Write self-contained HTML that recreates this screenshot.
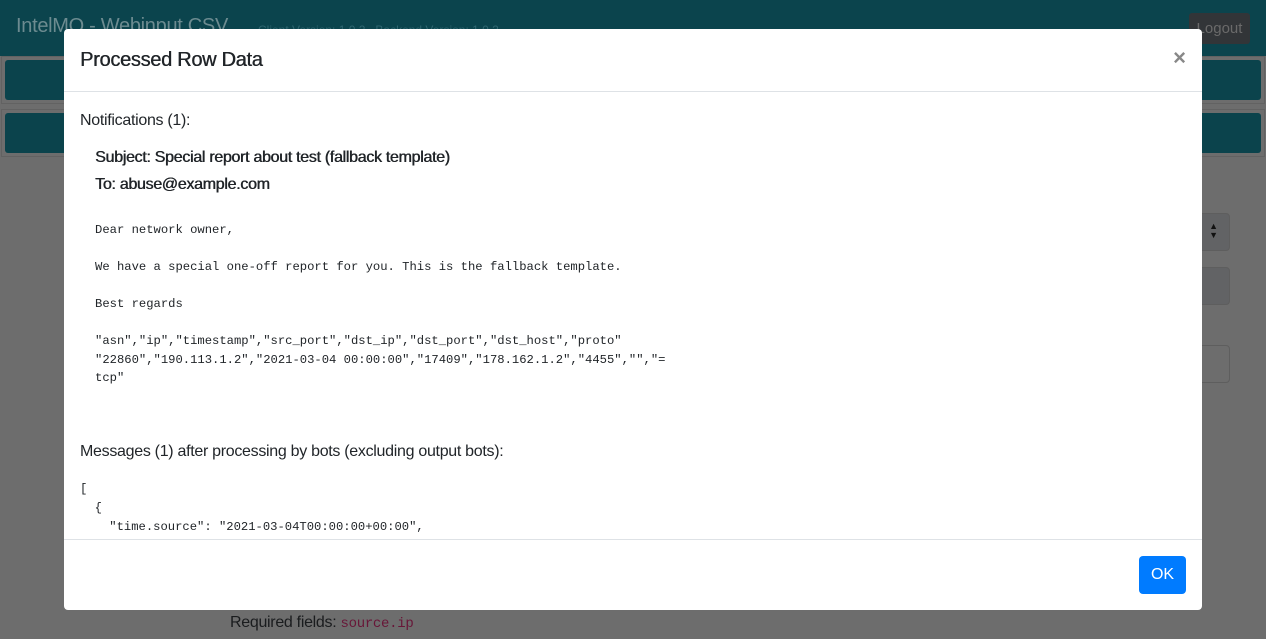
<!DOCTYPE html>
<html><head><meta charset="utf-8"><style>
*{box-sizing:border-box;margin:0;padding:0}
body{width:1266px;height:639px;overflow:hidden;background:#6d6d6d;font-family:"Liberation Sans",sans-serif;position:relative;color:#212529}
.nav{position:absolute;left:0;top:0;width:1266px;height:56px;background:#0b444d}
.brand{position:absolute;left:16px;top:15px;font-size:20px;color:#6c8b90;letter-spacing:-0.3px}
.ver{position:absolute;left:258px;top:23px;font-size:12px;color:#2f6670}
.logout{position:absolute;left:1189px;top:13px;width:61px;height:31px;background:#323538;border-radius:3px;color:#6a6a6a;font-size:15px;line-height:31px;text-align:center}
.card{position:absolute;left:1px;width:1264px;border:1px solid #626262;background:#6d6d6d}
.card div{position:absolute;left:3px;top:3px;right:3px;bottom:3px;background:#0b434c;border-radius:3px}
.inp{position:absolute;border:1px solid #5e5e5e;border-radius:4px}
.req{position:absolute;left:230px;top:614px;font-size:16px;color:#1a1c1e;letter-spacing:-0.3px}
.req code{font-family:"Liberation Mono",monospace;font-size:14px;color:#681638}
.modal{position:absolute;left:64px;top:29px;width:1138px;height:581px;background:#fff;border-radius:4px;overflow:hidden}
.mh{height:63px;border-bottom:1px solid #dee2e6;position:relative}
.mh h5{position:absolute;left:16px;top:20px;font-size:20px;font-weight:normal;letter-spacing:-0.3px;text-shadow:0.4px 0 0 #212529}
.x{position:absolute;right:16px;top:16px;font-size:22px;font-weight:bold;color:#888}
.mb{position:absolute;top:63px;left:0;right:0;height:447px;overflow:hidden}
.t{position:absolute;left:16px;font-size:16px;letter-spacing:-0.3px}
.b{position:absolute;left:31px;font-size:16px;font-weight:normal;letter-spacing:-0.3px;text-shadow:0.5px 0 0 #212529}
pre{position:absolute;font-family:"Liberation Mono",monospace;font-size:12.2px;line-height:18.5px;color:#212529}
.mf{position:absolute;top:510px;left:0;right:0;bottom:0;border-top:1px solid #dee2e6}
.ok{position:absolute;left:1075px;top:16px;width:47px;height:38px;background:#007bff;color:#fff;border-radius:4px;font-size:16px;line-height:38px;text-align:center}
</style></head><body>
<div class="nav"><div class="brand">IntelMQ - Webinput CSV</div><div class="ver">Client Version: 1.0.2 &nbsp; Backend Version: 1.0.2</div><div class="logout">Logout</div></div>
<div class="card" style="top:56px;height:48px"><div></div></div>
<div class="card" style="top:109px;height:48px"><div></div></div>
<div class="inp" style="left:1150px;top:213px;width:80px;height:38px;background:#626365"><span style="position:absolute;right:11px;top:8px;font-size:9px;color:#111;line-height:9px">&#9650;<br>&#9660;</span></div>
<div class="inp" style="left:1150px;top:267px;width:80px;height:38px;background:#626365"></div>
<div class="inp" style="left:1150px;top:345px;width:80px;height:38px"></div>
<div class="req">Required fields: <code>source.ip</code></div>
<div class="modal">
<div class="mh"><h5>Processed Row Data</h5><div class="x">×</div></div>
<div class="mb">
<div class="t" style="top:20px">Notifications (1):</div>
<div class="b" style="top:57px">Subject: Special report about test (fallback template)</div>
<div class="b" style="top:84px">To: abuse@example.com</div>
<pre style="left:31px;top:129px">Dear network owner,

We have a special one-off report for you. This is the fallback template.

Best regards

"asn","ip","timestamp","src_port","dst_ip","dst_port","dst_host","proto"
"22860","190.113.1.2","2021-03-04 00:00:00","17409","178.162.1.2","4455","","=
tcp"</pre>
<div class="t" style="top:351px">Messages (1) after processing by bots (excluding output bots):</div>
<pre style="left:16px;top:388px;line-height:19px">[
  {
    "time.source": "2021-03-04T00:00:00+00:00",
    "extra.feed_name": "test",</pre>
</div>
<div class="mf"><div class="ok">OK</div></div>
</div>
</body></html>
